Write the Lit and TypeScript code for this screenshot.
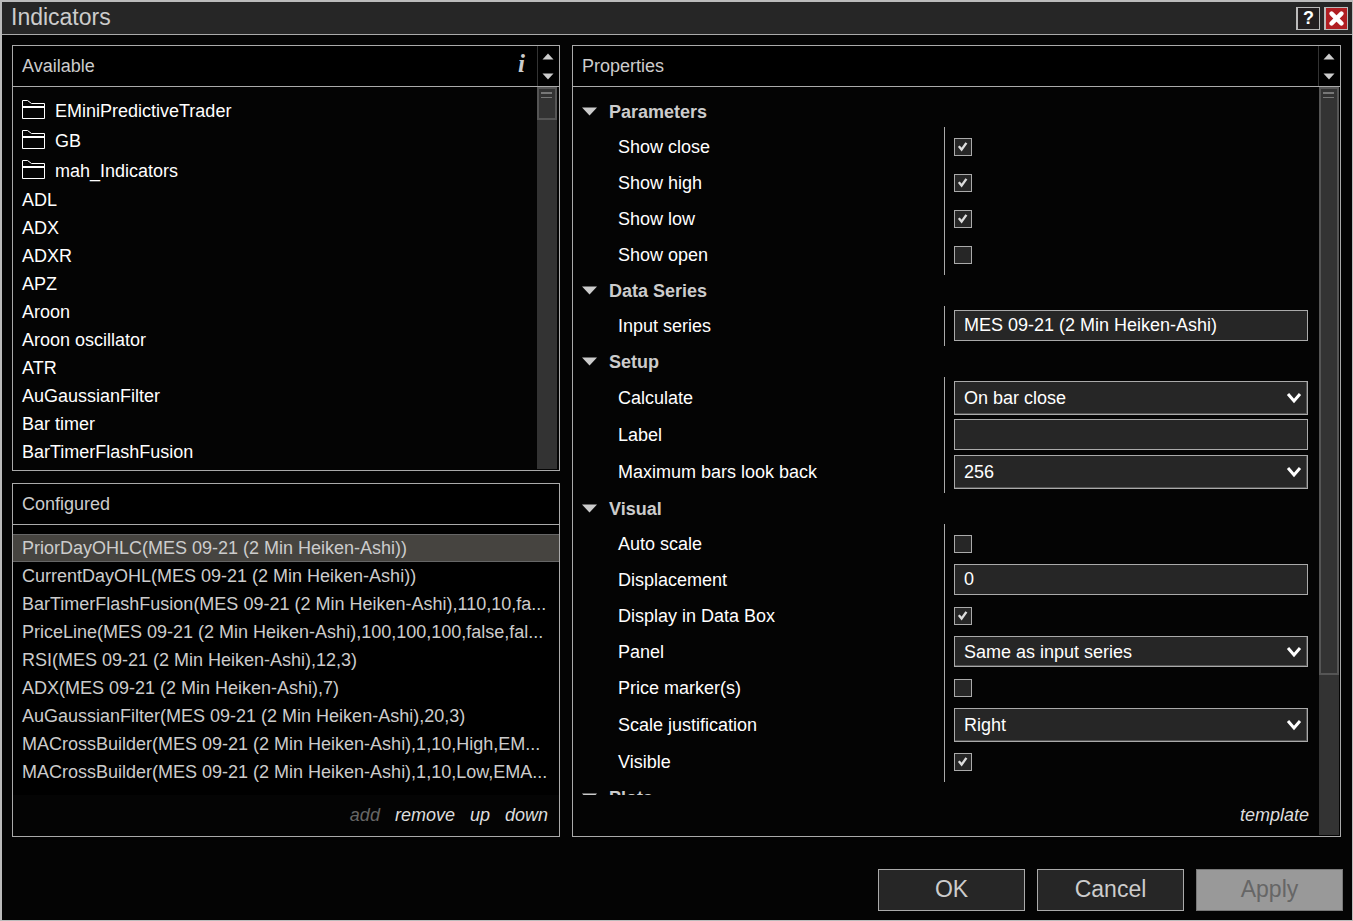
import { LitElement, html, css, nothing } from "lit";
import { customElement, property } from "lit/decorators.js";
import { classMap } from "lit/directives/class-map.js";

type Field =
  | { kind: "check"; label: string; checked: boolean }
  | { kind: "text"; label: string; value: string }
  | { kind: "select"; label: string; value: string; compact?: boolean };

interface Group {
  title: string;
  fields: Field[];
}

const FOLDERS = ["EMiniPredictiveTrader", "GB", "mah_Indicators"];

const AVAILABLE = [
  "ADL",
  "ADX",
  "ADXR",
  "APZ",
  "Aroon",
  "Aroon oscillator",
  "ATR",
  "AuGaussianFilter",
  "Bar timer",
  "BarTimerFlashFusion",
];

const CONFIGURED = [
  "PriorDayOHLC(MES 09-21 (2 Min Heiken-Ashi))",
  "CurrentDayOHL(MES 09-21 (2 Min Heiken-Ashi))",
  "BarTimerFlashFusion(MES 09-21 (2 Min Heiken-Ashi),110,10,fa...",
  "PriceLine(MES 09-21 (2 Min Heiken-Ashi),100,100,100,false,fal...",
  "RSI(MES 09-21 (2 Min Heiken-Ashi),12,3)",
  "ADX(MES 09-21 (2 Min Heiken-Ashi),7)",
  "AuGaussianFilter(MES 09-21 (2 Min Heiken-Ashi),20,3)",
  "MACrossBuilder(MES 09-21 (2 Min Heiken-Ashi),1,10,High,EM...",
  "MACrossBuilder(MES 09-21 (2 Min Heiken-Ashi),1,10,Low,EMA...",
];

const GROUPS: Group[] = [
  {
    title: "Parameters",
    fields: [
      { kind: "check", label: "Show close", checked: true },
      { kind: "check", label: "Show high", checked: true },
      { kind: "check", label: "Show low", checked: true },
      { kind: "check", label: "Show open", checked: false },
    ],
  },
  {
    title: "Data Series",
    fields: [{ kind: "text", label: "Input series", value: "MES 09-21 (2 Min Heiken-Ashi)" }],
  },
  {
    title: "Setup",
    fields: [
      { kind: "select", label: "Calculate", value: "On bar close" },
      { kind: "text", label: "Label", value: "" },
      { kind: "select", label: "Maximum bars look back", value: "256" },
    ],
  },
  {
    title: "Visual",
    fields: [
      { kind: "check", label: "Auto scale", checked: false },
      { kind: "text", label: "Displacement", value: "0" },
      { kind: "check", label: "Display in Data Box", checked: true },
      { kind: "select", label: "Panel", value: "Same as input series", compact: true },
      { kind: "check", label: "Price marker(s)", checked: false },
      { kind: "select", label: "Scale justification", value: "Right" },
      { kind: "check", label: "Visible", checked: true },
    ],
  },
  { title: "Plots", fields: [] },
];

const base = css`
  * {
    box-sizing: border-box;
  }
  button,
  input,
  select {
    font: inherit;
    color: inherit;
    margin: 0;
    border-radius: 0;
    outline: none;
  }
  button {
    padding: 0;
    border: 0;
    background: none;
    cursor: pointer;
  }
  svg {
    display: block;
  }
`;

/* Pair of arrow buttons that sits above a scroll track. */
@customElement("scroll-arrows")
export class ScrollArrows extends LitElement {
  static styles = [
    base,
    css`
      :host {
        display: flex;
        flex-direction: column;
        justify-content: space-between;
        align-self: stretch;
        width: 22px;
        padding: 7px 0 6px;
        border-left: 1px solid #333;
      }
      .arrow {
        display: flex;
        width: 19px;
        justify-content: center;
      }
    `,
  ];

  render() {
    return html`
      <button class="arrow" aria-label="Scroll up">
        <svg width="12" height="7" viewBox="0 0 12 7"><path d="M0.5 6.5L6 0.5L11.5 6.5Z" fill="#ccc" /></svg>
      </button>
      <button class="arrow" aria-label="Scroll down">
        <svg width="12" height="7" viewBox="0 0 12 7"><path d="M0.5 0.5L6 6.5L11.5 0.5Z" fill="#ccc" /></svg>
      </button>
    `;
  }
}

/* Vertical scroll track; `extent` is the share of it that the thumb covers. */
@customElement("scroll-track")
export class ScrollTrack extends LitElement {
  @property({ type: Number }) extent = 50;

  static styles = [
    base,
    css`
      :host {
        display: block;
        width: 20px;
        background: #333;
      }
      .thumb {
        display: flex;
        justify-content: center;
        padding-top: 3px;
        border: 2px solid #555;
        background: #333;
      }
    `,
  ];

  render() {
    return html`
      <div class="thumb" style="height:${this.extent}%">
        <svg width="12" height="7" viewBox="0 0 12 7">
          <path d="M0 0h11v2H0zM0 5h11v1H0z" fill="#777" />
        </svg>
      </div>
    `;
  }
}

@customElement("property-field")
export class PropertyField extends LitElement {
  @property({ attribute: false }) field!: Field;

  static styles = [
    base,
    css`
      :host {
        display: block;
      }
      .row {
        display: grid;
        grid-template-columns: 371fr 375fr;
        align-items: center;
        height: 36px;
        color: #fff;
      }
      .row.tall {
        height: 38px;
      }
      .label {
        padding-left: 45px;
      }
      .control {
        display: grid;
        align-items: center;
        margin: 0 11px 0 10px;
      }
      .control > * {
        grid-area: 1 / 1;
      }
      .box {
        appearance: none;
        width: 18px;
        height: 18px;
        border: 1px solid #aaa;
        background: #262626;
      }
      .tick {
        margin-left: 4px;
        pointer-events: none;
      }
      .entry {
        appearance: none;
        width: 100%;
        height: 31px;
        margin-bottom: 1px;
        padding: 0 9px 1px;
        border: 1px solid #aaa;
        background: #262626;
      }
      .entry.drop {
        height: 34px;
        margin-bottom: 0;
        padding-right: 32px;
        box-shadow: inset -1px -1px #555;
      }
      .entry.drop.compact {
        height: 31px;
        margin-bottom: 1px;
        padding-bottom: 0;
      }
      .chevron {
        justify-self: end;
        margin-right: 6px;
        pointer-events: none;
      }
    `,
  ];

  private renderControl(f: Field) {
    if (f.kind === "check") {
      return html`
        <input id="control" class="box" type="checkbox" .checked=${f.checked} />
        ${f.checked
          ? html`<svg class="tick" width="10" height="10" viewBox="0 0 10 10">
              <path d="M0.8 4.2L3.6 7.6L8.4 0.9" fill="none" stroke="#ddd" stroke-width="2.4" />
            </svg>`
          : nothing}
      `;
    }
    if (f.kind === "text") {
      return html`<input id="control" class="entry" type="text" .value=${f.value} />`;
    }
    return html`
      <select id="control" class=${classMap({ entry: true, drop: true, compact: !!f.compact })}>
        <option>${f.value}</option>
      </select>
      <svg class="chevron" width="16" height="12" viewBox="0 0 16 12">
        <path d="M2 2L8 9L14 2" fill="none" stroke="#fff" stroke-width="3" />
      </svg>
    `;
  }

  render() {
    const f = this.field;
    const tall = f.kind === "select" && !f.compact;
    return html`
      <div class=${classMap({ row: true, tall })}>
        <label class="label" for="control">${f.label}</label>
        <div class="control">${this.renderControl(f)}</div>
      </div>
    `;
  }
}

@customElement("app-root")
export class AppRoot extends LitElement {
  static styles = [
    base,
    css`
      :host {
        display: block;
        font-family: "Liberation Sans", Arial, sans-serif;
        font-size: 18px;
        line-height: 20px;
        color: #ccc;
      }
      .window {
        display: flex;
        flex-direction: column;
        height: 100vh;
        border: solid #bbb;
        border-width: 2px 1px 1px 2px;
        background: #040404;
      }
      .titlebar {
        display: flex;
        align-items: center;
        gap: 4px;
        height: 33px;
        padding: 0 4px 0 9px;
        border-bottom: 1px solid #aaa;
        background: #262626;
      }
      .title {
        flex: 1;
        margin: 0;
        padding-bottom: 2px;
        font-size: 23px;
        line-height: 26px;
        font-weight: normal;
      }
      .tool {
        display: grid;
        place-items: center;
        width: 24px;
        height: 23px;
        padding-bottom: 2px;
        border: 1px solid #bbb;
        border-left-width: 2px;
        background: #231f20;
        color: #fff;
        font-weight: bold;
      }
      .tool.close {
        padding-bottom: 0;
        background: #b01e22;
      }
      .main {
        flex: 1;
        min-height: 0;
        display: grid;
        grid-template-columns: 548fr 769fr;
        gap: 12px;
        padding: 10px 11px 0 10px;
      }
      .column {
        display: flex;
        flex-direction: column;
        gap: 12px;
        min-width: 0;
        min-height: 0;
      }
      .panel {
        display: flex;
        flex-direction: column;
        min-width: 0;
        min-height: 0;
        border: 1px solid #aaa;
      }
      .available {
        flex: 426 1 0;
      }
      .configured {
        flex: 354 1 0;
      }
      .head {
        display: flex;
        align-items: center;
        height: 41px;
        padding-left: 9px;
        border-bottom: 1px solid #aaa;
        background: #000;
      }
      .caption {
        flex: 1;
        margin: 0;
        font-size: 18px;
        font-weight: normal;
      }
      .info {
        padding: 0 12px 4px;
        font: italic bold 25px/28px "Liberation Serif", serif;
      }
      .body {
        flex: 1;
        min-height: 0;
        display: flex;
        padding: 0 1px 1px 0;
      }
      .available .body {
        padding-right: 2px;
      }
      .pane {
        flex: 1;
        min-width: 0;
        display: flex;
        flex-direction: column;
      }
      .list {
        flex: 1;
        min-height: 0;
        margin: 0;
        padding: 9px 0 0;
        overflow: hidden;
        list-style: none;
      }
      .item {
        padding: 0 8px 0 9px;
        border: solid transparent;
        border-width: 1px 0;
        line-height: 26px;
        white-space: nowrap;
        overflow: hidden;
        text-overflow: ellipsis;
      }
      .available .item {
        color: #fff;
      }
      .item.folder {
        display: flex;
        align-items: center;
        gap: 10px;
        line-height: 28px;
      }
      .configured .list {
        background: #000;
      }
      .item.selected {
        border-color: #666;
        background: #464440;
      }
      .links {
        display: flex;
        justify-content: flex-end;
        align-items: center;
        gap: 15px;
        height: 40px;
        padding-right: 10px;
        color: #ddd;
        font-style: italic;
      }
      .configured .links {
        height: 41px;
        padding: 0 11px 1px 0;
      }
      .links .off {
        color: #666;
      }
      .groups {
        flex: 1;
        min-height: 0;
        padding-top: 9px;
        overflow: hidden;
      }
      .group-title {
        display: flex;
        align-items: center;
        gap: 12px;
        width: 100%;
        height: 31px;
        padding-left: 9px;
        font-weight: bold;
      }
      .fields {
        padding: 2px 0;
        background: linear-gradient(#aaa, #aaa) calc(100% * 371 / 745) 0 / 1px 100% no-repeat;
      }
      .actions {
        display: flex;
        justify-content: flex-end;
        gap: 12px;
        padding: 32px 9px 9px;
      }
      .action {
        width: 147px;
        height: 42px;
        padding-bottom: 2px;
        border: 1px solid #aaa;
        background: #262626;
        font-size: 23px;
      }
      .action:disabled {
        border-color: #777;
        background: #999;
        color: #666;
      }
    `,
  ];

  private renderFolder(name: string) {
    return html`<li class="item folder">
      <svg width="23" height="22" viewBox="0 0 23 22">
        <path d="M0.5 18.5V0.5H5.5L9.500 3.5H22.5V18.5Z" fill="none" stroke="#fff" />
        <path d="M1 7H22" stroke="#fff" stroke-width="2" />
      </svg>
      <span>${name}</span>
    </li>`;
  }

  private renderGroup(g: Group) {
    return html`
      <button class="group-title" aria-expanded="true">
        <svg width="15" height="9" viewBox="0 0 15 9"><path d="M0 0.5H15L7.5 8.5Z" fill="#ccc" /></svg>
        <span>${g.title}</span>
      </button>
      ${g.fields.length
        ? html`<div class="fields">
            ${g.fields.map((f) => html`<property-field .field=${f}></property-field>`)}
          </div>`
        : nothing}
    `;
  }

  render() {
    return html`
      <div class="window">
        <header class="titlebar">
          <h1 class="title">Indicators</h1>
          <button class="tool">?</button>
          <button class="tool close" aria-label="Close">
            <svg width="15" height="15" viewBox="0 0 15 15">
              <path d="M2.6 2.6L12.4 12.4M12.4 2.6L2.6 12.4" stroke="#fff" stroke-width="4.4" stroke-linecap="round" />
            </svg>
          </button>
        </header>
        <main class="main">
          <div class="column">
            <section class="panel available">
              <div class="head">
                <h2 class="caption">Available</h2>
                <button class="info">i</button>
                <scroll-arrows></scroll-arrows>
              </div>
              <div class="body">
                <ul class="list">
                  ${FOLDERS.map((n) => this.renderFolder(n))}
                  ${AVAILABLE.map((n) => html`<li class="item">${n}</li>`)}
                </ul>
                <scroll-track .extent=${8.6}></scroll-track>
              </div>
            </section>
            <section class="panel configured">
              <div class="head"><h2 class="caption">Configured</h2></div>
              <ul class="list">
                ${CONFIGURED.map(
                  (n, i) => html`<li class=${classMap({ item: true, selected: i === 0 })}>${n}</li>`
                )}
              </ul>
              <div class="links">
                <button class="off" disabled>add</button>
                <button>remove</button>
                <button>up</button>
                <button>down</button>
              </div>
            </section>
          </div>
          <section class="panel">
            <div class="head">
              <h2 class="caption">Properties</h2>
              <scroll-arrows></scroll-arrows>
            </div>
            <div class="body">
              <div class="pane">
                <div class="groups">${GROUPS.map((g) => this.renderGroup(g))}</div>
                <div class="links"><button>template</button></div>
              </div>
              <scroll-track .extent=${78.6}></scroll-track>
            </div>
          </section>
        </main>
        <footer class="actions">
          <button class="action">OK</button>
          <button class="action">Cancel</button>
          <button class="action" disabled>Apply</button>
        </footer>
      </div>
    `;
  }
}
